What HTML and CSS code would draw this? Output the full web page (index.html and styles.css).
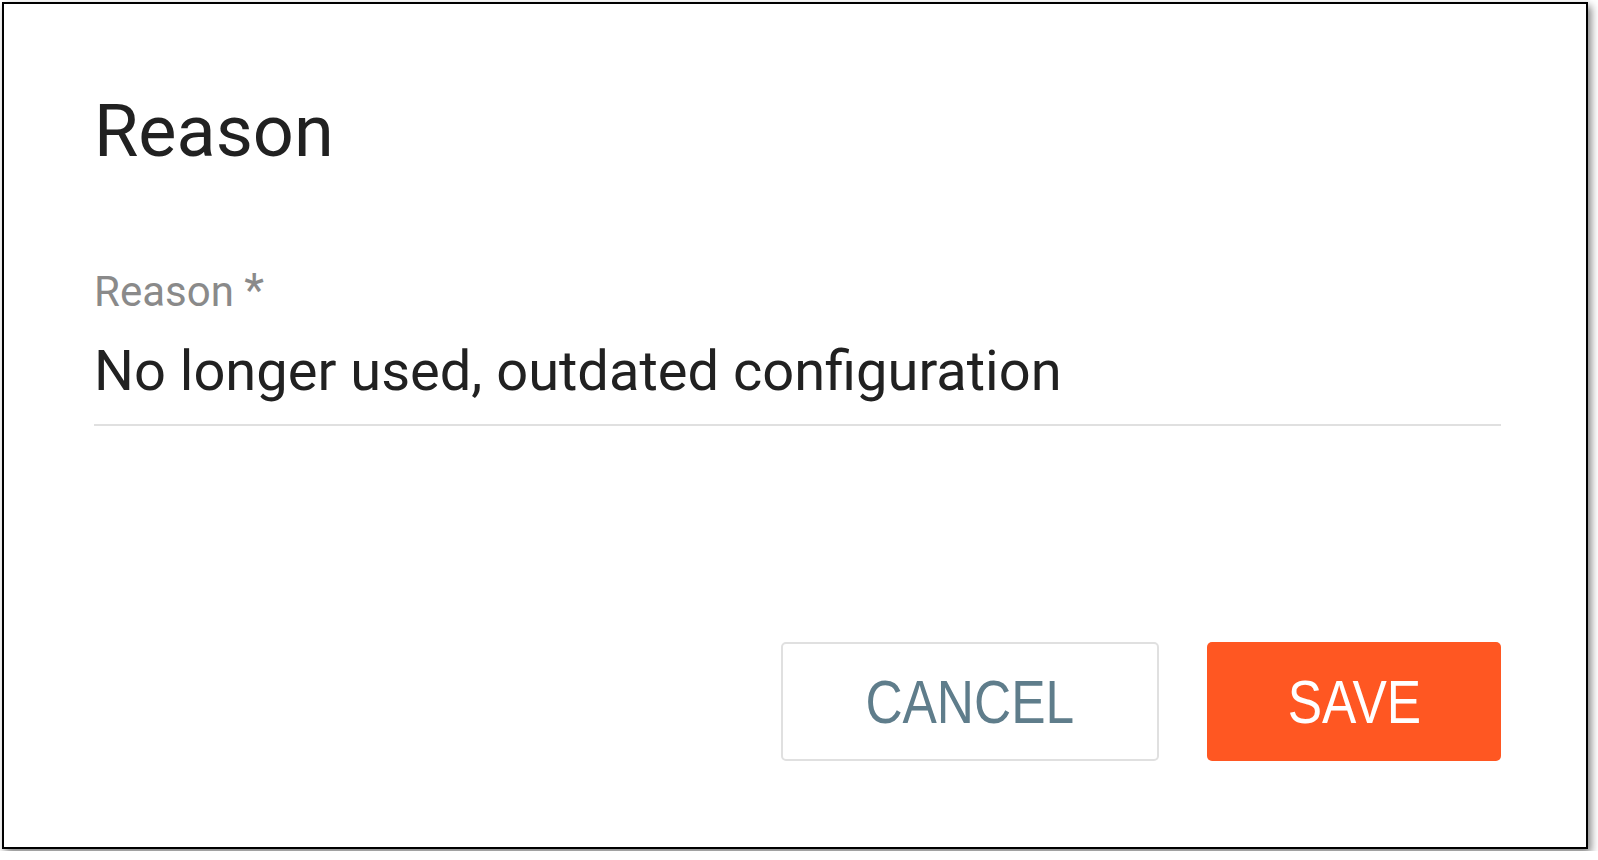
FILE: index.html
```html
<!DOCTYPE html>
<html lang="en">
<head>
<meta charset="utf-8">
<title>Reason</title>
<link rel="stylesheet" href="styles.css">
</head>
<body>
  <div class="dialog">
    <h1 class="dialog-title">Reason</h1>
    <div class="field">
      <label class="field-label">Reason <span class="req">*</span></label>
      <div class="field-input">No longer used, outdated configuration</div>
    </div>
    <div class="actions">
      <button class="btn btn-cancel"><span class="btn-text">CANCEL</span></button>
      <button class="btn btn-save"><span class="btn-text">SAVE</span></button>
    </div>
  </div>
</body>
</html>
```

FILE: styles.css
```css
html, body {
  margin: 0;
  padding: 0;
  background: #ffffff;
}

body {
  padding: 2px;
  font-family: Roboto, "Noto Sans", sans-serif;
}

.dialog {
  box-sizing: border-box;
  width: 1586px;
  height: 847px;
  border: 2px solid #000;
  background: #fff;
  box-shadow: 3px 4px 8px rgba(0, 0, 0, 0.5);
  padding: 92px 85px 0 90px;
  display: flex;
  flex-direction: column;
}

.dialog-title {
  margin: 0;
  font-size: 72px;
  line-height: 72px;
  font-weight: 400;
  color: #212121;
}

.field {
  margin-top: 102px;
  display: flex;
  flex-direction: column;
  border-bottom: 2px solid #e0e0e0;
  padding-bottom: 25px;
}

.field-label {
  font-size: 42px;
  line-height: 41px;
  color: #8a8a8a;
}

.req {
  font-size: 46px;
}

.field-input {
  margin-top: 31px;
  font-size: 56px;
  line-height: 56px;
  color: #212121;
}

.actions {
  margin-top: 216px;
  display: flex;
  justify-content: flex-end;
  gap: 48px;
}

.btn {
  box-sizing: border-box;
  height: 119px;
  border-radius: 5px;
  display: flex;
  align-items: center;
  justify-content: center;
  font-family: "Liberation Sans", Arial, sans-serif;
  font-size: 62px;
  padding: 0;
  cursor: pointer;
}

.btn-text {
  display: inline-block;
  transform: scaleX(0.83);
}

.btn-cancel {
  width: 378px;
  background: #fff;
  border: 2px solid #e0e0e0;
  color: #5f7d8b;
}

.btn-save {
  width: 294px;
  background: #ff5722;
  border: none;
  color: #fff;
}
```
